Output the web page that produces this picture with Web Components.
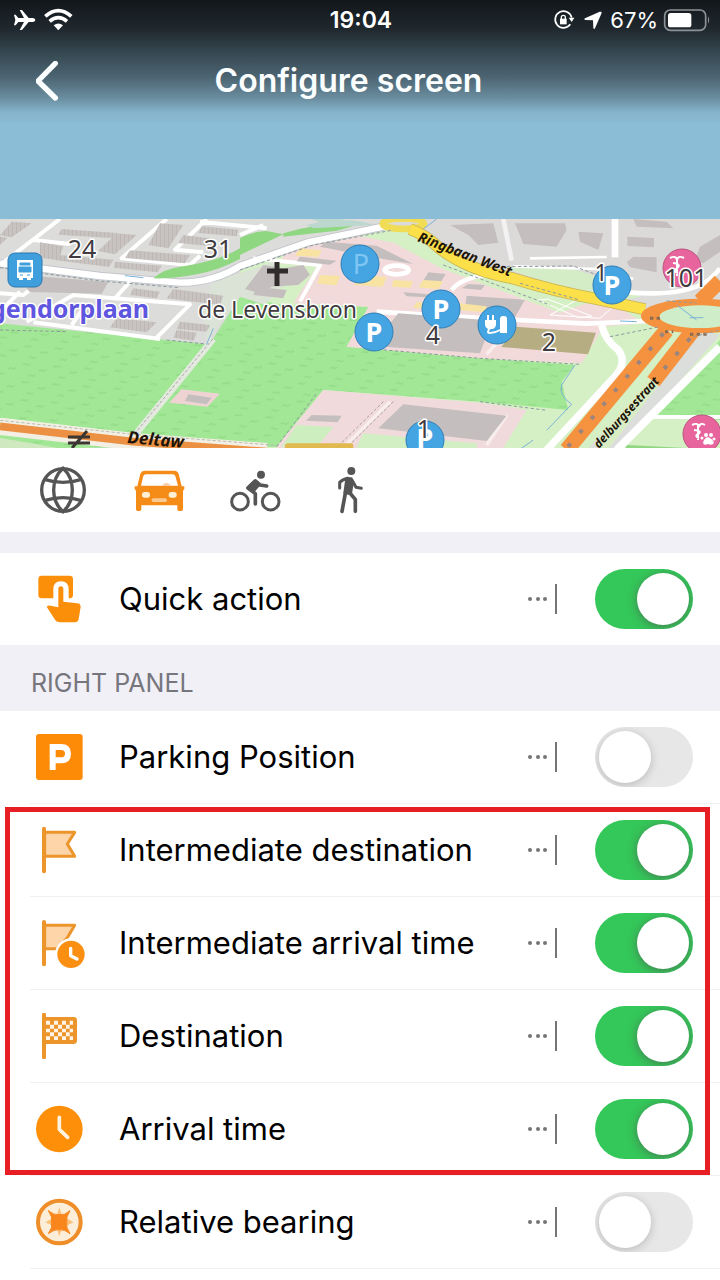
<!DOCTYPE html>
<html lang="en">
<head>
<meta charset="utf-8">
<meta name="viewport" content="width=device-width, initial-scale=1">
<title>Configure screen</title>
<style>
  body { margin: 0; background: #fff; color: #000; font-family: Inter, "Liberation Sans", sans-serif; }
</style>
</head>
<body>
<configure-screen>
  <top-header slot="header">Configure screen</top-header>
  <map-preview slot="map"></map-preview>
  <profile-tabs slot="tabs"></profile-tabs>

  <widget-section>
    <widget-row checked>
      <svg slot="icon" viewBox="108 375 144 144" fill="#fc8f0a"><path d="M125 377h84q10 0 10 10v48q0 9-9 10h-4v-27q0-24-23-24t-23 24v27h-35q-10 0-10-10v-48q0-10 10-10z"/><path d="M175 417q0-8 7.500-8t7.500 8v38l42 5q10 1 10 11l-6 36q-2 10-12 10h-45q-8 0-13-6l-26-41q5-5 12-3l23 5z"/></svg>
      Quick action
    </widget-row>
  </widget-section>

  <widget-section heading="Right panel">
    <widget-row divided>
      <svg slot="icon" viewBox="108 249 144 144"><rect x="108" y="252" width="140" height="138" rx="9" fill="#fd8b08"/><path d="M158 360v-69h25q21 0 21 20t-21 20h-25" fill="none" stroke="#fff" stroke-width="18"/></svg>
      Parking Position
    </widget-row>
    <highlight-frame>
      <widget-row divided checked>
        <svg slot="icon" viewBox="108 528 144 144" stroke="#ec952b" stroke-width="9" stroke-linecap="round" stroke-linejoin="round"><path d="M134 547h90l-22 35 22 37h-90z" fill="#fdd5a8"/><path d="M132 536v128" stroke-width="12"/></svg>
        Intermediate destination
      </widget-row>
      <widget-row divided checked>
        <svg slot="icon" viewBox="108 57 144 144" overflow="visible" stroke="#ec952b" stroke-width="9" stroke-linecap="round" stroke-linejoin="round"><path d="M134 76h90l-22 37-30 33h-38z" fill="#fdd5a8"/><path d="M132 66v127" stroke-width="12"/><circle cx="213" cy="163" r="45" fill="#fff" stroke="#fff" stroke-width="6"/><circle cx="213" cy="163" r="41" fill="#fa8f12" stroke="none"/><path d="M212 145v22l19 10" fill="none" stroke="#fff" stroke-width="10"/></svg>
        Intermediate arrival time
      </widget-row>
      <widget-row divided checked>
        <svg slot="icon" viewBox="108 336 144 144" fill="#ec952b"><rect x="126" y="339" width="12" height="138" rx="4"/><path d="M130 351h91q10 0 10 10v60q0 11-10 11h-91z"/><path d="M138 362h12v12h-12zM162 362h12v12h-12zM186 362h12v12h-12zM209 362h10v12h-10zM150 374h12v12h-12zM174 374h12v12h-12zM198 374h11v12h-11zM138 386h12v11h-12zM162 386h12v11h-12zM186 386h12v11h-12zM209 386h10v11h-10zM150 397h12v12h-12zM174 397h12v12h-12zM198 397h11v12h-11zM138 409h12v11h-12zM162 409h12v11h-12zM186 409h12v11h-12zM209 409h10v11h-10z" fill="#fff4e6"/></svg>
        Destination
      </widget-row>
      <widget-row divided checked>
        <svg slot="icon" viewBox="108 75 144 144"><circle cx="178" cy="147" r="70" fill="#fd8f09"/><path d="M178 112v36l25 24" fill="none" stroke="#fff3df" stroke-width="11" stroke-linecap="round" stroke-linejoin="round"/></svg>
        Arrival time
      </widget-row>
    </highlight-frame>
    <widget-row divided>
      <svg slot="icon" viewBox="108 354 144 144"><circle cx="178" cy="426" r="64" fill="#fdeeda" stroke="#ef8d28" stroke-width="12"/><path d="M178 382l9 26 34 19-34 16-9 26-8-26-34-16 34-19z" fill="#fbc07a"/><path d="M145 392q18 15 33 12 15 3 32-12-13 20-10 35-3 15 10 34-18-14-32-12-15-2-33 12 14-19 10-34 4-15-10-35z" fill="#f8861c" stroke="#f8861c" stroke-width="3"/></svg>
      Relative bearing
    </widget-row>
  </widget-section>
</configure-screen>

<script>
const define = (name, html, setup) => {
  const template = document.createElement('template');
  template.innerHTML = html;
  customElements.define(name, class extends HTMLElement {
    constructor() {
      super();
      this.attachShadow({ mode: 'open' }).append(template.content.cloneNode(true));
    }
    connectedCallback() { if (setup) setup(this, this.shadowRoot); }
  });
};

define('configure-screen', `
<style>
  :host { display: flex; flex-direction: column; background: #fff; }
  main { display: flex; flex-direction: column; }
</style>
<slot name="header"></slot>
<slot name="map"></slot>
<slot name="tabs"></slot>
<main><slot></slot></main>`);

define('status-bar', `
<style>
  :host { display: grid; grid-template-columns: 1fr auto 1fr; align-items: center; height: 40px; padding: 0 12px 0 14px; color: #fff; font-size: 23px; line-height: 28px; }
  svg { display: block; overflow: visible; }
  .left, .right { display: flex; align-items: center; }
  .left { gap: 8px; }
  .right { justify-content: flex-end; gap: 8px; }
  time { font-weight: 600; }
  .right span { font-size: 22px; }
  .battery { margin-left: -2px; }
</style>
<div class="left">
  <svg width="22" height="20" viewBox="45 28 66 60" fill="#fff"><path d="M45 42h5l8 10h17L62 28h7l20 24h13q7 1 7 6t-7 6H89L69 88h-7l13-24H58l-8 10h-5l4-16z"/></svg>
  <svg width="30" height="22" viewBox="134 26 90 66" fill="none" stroke="#fff" stroke-width="11"><path d="M138 48Q177 14 216 48M151 63q26-22 52 0"/><path d="M163 75q14-11 28 0l-14 15z" fill="#fff" stroke="none"/></svg>
</div>
<time>19:04</time>
<div class="right">
  <svg width="22" height="20" viewBox="584 30 66 60" fill="none" stroke="#fff" stroke-width="5"><path d="M633 73a25 25 0 1 1 4-20"/><path d="M628 53h17l-8 13z" fill="#fff" stroke="none"/><path d="M602 56h20v17h-20z" fill="#fff" stroke="none"/><path d="M606 57v-5q0-6 6-6t6 6v5" stroke-width="4"/></svg>
  <svg width="18" height="18" viewBox="677 33 54 54" fill="#fff"><path d="M729 35q2 1 0 6l-19 44q-3 4-5-1l-1-23-23-1q-6-2-1-5l44-20z"/></svg>
  <span>67%</span>
  <svg class="battery" width="44" height="22" viewBox="909 23 132 66"><rect x="911" y="26" width="123" height="61" rx="17" fill="none" stroke="#8d9296" stroke-width="5"/><rect x="921" y="35" width="70" height="43" rx="8" fill="#fff"/><path d="M1041 45q7 11 0 22z" fill="#8d9296"/></svg>
</div>`);

define('top-header', `
<style>
  :host { display: block; height: 219px; background: linear-gradient(#12161a 0, #20292f 30px, #354750 52px, #4d6674 78px, #6a8d9f 98px, #84b3ca 112px, #8bbdd6 124px); }
  nav { display: flex; align-items: center; height: 82px; padding: 0 95px 0 24px; }
  button { display: grid; place-items: center; width: 48px; height: 48px; padding: 0; border: 0; background: none; }
  svg { width: 24px; height: 40px; }
  h1 { flex: 1; margin: 0; color: #fbfeff; font-size: 32px; line-height: 40px; font-weight: 600; text-align: center; }
</style>
<status-bar></status-bar>
<nav>
  <button aria-label="Back"><svg viewBox="108 183 72 120" fill="none" stroke="#fbfeff" stroke-width="16" stroke-linecap="round" stroke-linejoin="round"><path d="M166 190l-52 53 52 51"/></svg></button>
  <h1><slot></slot></h1>
</nav>`);

define('map-preview', `
<style>
  :host { display: block; height: 229px; overflow: hidden; }
  svg { display: block; width: 100%; height: 100%; }
  text { font-family: "Noto Sans", sans-serif; }
  .label { fill: #3f3b40; font-size: 25px; paint-order: stroke; stroke: #fff; stroke-width: 3px; stroke-linejoin: round; }
  .bold { fill: #5f56e0; font-weight: 700; }
  .road { fill: #1d1407; font-weight: 700; font-style: italic; }
  .p { fill: #fff; font-size: 27px; font-weight: 700; text-anchor: middle; }
  .mid { text-anchor: middle; }
  .end { text-anchor: end; }
</style>
<svg viewBox="0 219 720 229" preserveAspectRatio="xMidYMin slice" role="img" aria-label="Map">
  <defs>
    <pattern id="grass" width="92" height="54" patternUnits="userSpaceOnUse" patternTransform="rotate(4)"><rect width="92" height="54" fill="#a1e795"/><path d="M8 12l7-4 7 3 9-4M56 26l8-3 7 3 9-5M24 44l8-4 8 4 7-4" fill="none" stroke="#8fd884" stroke-width="3"/></pattern>
    <pattern id="houses" width="12" height="40" patternUnits="userSpaceOnUse"><rect width="12" height="40" fill="#c8c3c1"/><path d="M0 0v40" stroke="#b3adab" stroke-width="3"/></pattern>
  </defs>
  <g transform="translate(0 215) scale(.33333)">
    <rect y="0" width="2160" height="720" fill="#dcdcda"/>
    <!-- fields, parks and commercial ground -->
    <path d="M720 165l170-70 190-50 140 0 120 70 340 130 240 40 240-10v445H720z" fill="#d6f0c5"/>
    <path d="M0 325L625 388 640 370 720 245 850 270 1110 275 1040 395 1440 430 1725 450 1685 500 1705 585 1440 560 970 525 830 695 0 700z" fill="url(#grass)"/>
    <path d="M640 190l80-15 100-35 40 60-65 70-75-25-80 110-20 20-10-90z" fill="#dae3d6"/>
    <path d="M860 105l220-42 100 20 150 80 350 130 80-28 110 20 60 40-120 10-65 110-305-15-400-35 65-120-225-10 70-110-110-10z" fill="#f2dadb"/>
    <path d="M1220 12h940v215l-150 10-150 8-160-35-110-45-150-10-100-35-60-50-100-30z" fill="#dcdad9"/>
    <path d="M1510 158l190-2 160 50 60 40-60 10-200-48z" fill="#d4edc6"/>
    <path d="M970 525l470 38 140 22-80 130H860l-30-20z" fill="#f0dadb"/>
    <path d="M890 630l110 6-50 60H845z" fill="#cdefbf"/>
    <path d="M1090 655l340 30v30h-370z" fill="#d2efc4"/>
    <path d="M2160 375v240l-210-6z" fill="url(#grass)"/>
    <path d="M545 523l115 13-38 39-115-12z" fill="#efd3d3"/>
    <path d="M2100 345l60 15-300 345h-100z" fill="#dcdedb"/>
    <path d="M1880 690l280 14v10h-290z" fill="#8fd781"/>
    <!-- road network -->
    <path d="M0 145l300 38 240 20q100 0 180-50l200-70 230-48" fill="none" stroke="#c3c6cc" stroke-width="25"/>
    <g fill="none" stroke="#fff" stroke-width="12" stroke-linejoin="round">
      <path d="M0 145l300 38 240 20q100 0 180-50l200-70 230-48" stroke-width="19"/>
      <path d="M180 12L0 150M100 75l110 12M500 12L365 130l205 20 30-28M620 12l-95 92 85 8M390 200l-45 50M0 235l70 5 45-35M0 290l60-60M470 368l100-100-350-28-140 80M215 330l35-50M100 322l380 50M720 60l70-30M600 20l200 20M760 130l200 20-60 110M0 615l390 45"/>
      <path d="M1510 12l25 125" stroke="#f2f2f2" stroke-width="14"/>
      <path d="M1845 12v115" stroke-width="20"/>
      <path d="M1540 154l250 8 110 30M1590 130l230-4" stroke-width="8"/>
      <path d="M1880 232q150 12 220-22 30-12 60-50" stroke-width="14"/>
      <path d="M1355 225q30-40 130-48M1130 290l330 20 300 16 180-8" stroke-width="14"/>
      <path d="M1805 330q10 45 50 75 30 40-15 85l-200 215" stroke-width="22"/>
      <path d="M2160 395l-310 310" stroke-width="24"/>
      <path d="M1950 606h210"/>
      <ellipse cx="1190" cy="165" rx="36" ry="13" fill="#f2dadb" stroke-width="14"/>
      <path d="M1490 385l-30 32M1570 250l-40 60M1170 560l-140 138M1520 600l-60 90" stroke="#f9eeee" stroke-width="10"/>
      <path d="M640 372L405 660" stroke="#e4e9df" stroke-width="20"/>
    </g>
    <path d="M638 372L405 655M1180 560l-140 138M1150 560l-140 138" fill="none" stroke="#8a8585" stroke-width="2" stroke-dasharray="9 6"/>
    <path d="M460 190q30-28 90-36 110-18 170-54v32q-65 34-130 46-70 14-130 12zM720 70q40-22 80-22l50 10-130 62zM850 55q120-35 240-30l-80 22-160 18z" fill="#8fd781"/>
    <path d="M920 30q120-30 200 0l-180 10zM935 12h100l-60 18z" fill="#bcd8ce"/>
    <!-- buildings -->
    <g fill="url(#houses)">
      <path d="M35 20l60 5-60 42-35-6zM0 65l22 4-22 20zM185 42l165 12-15 15-160-10zM350 55l60 5-65 58-50-10zM120 82l70 12-15 42-55-8zM180 120l160 14-12 22-160-20zM480 25l70 5-45 70-60-10zM390 106l180 14-15 25-180-16zM345 140l140 12-12 20-132-14zM605 34l110 10-5 20-115-10zM550 60l95 12-10 22-100-10zM400 220l80 10-10 20-80-10zM520 222l150 20-10 28-160-20zM540 320l90 10-10 20-90-8zM350 310l120 12-30 30-110-15zM530 345l60 8-8 24-62-9zM255 285l120 14-18 14-115-12z"/>
    </g>
    <g fill="#c4bfbe">
      <path d="M130 185l195 16-20 35-215-5-10-10z"/>
      <path d="M790 150l60 10 60-10 20 30-35 30-80 5-30 20-50-12zM770 215l90 10-10 25-90-10zM980 80l150 12 110 55-90-15-190-37zM900 125l110 12-20 12-100-10z"/>
      <path d="M1285 172l52 5-15 25-52-5zM1210 232l70 5 40 12-100-5zM1405 207l50 3-12 15-58-5z"/>
      <path d="M1195 295l260 20 15 20-30 80-290-20-20-20zM1400 242l175 12-30 52-150-25z"/>
      <path d="M1210 568l310 34-60 76-325-38z"/>
      <path d="M1350 30l130-5 15 58-60 7-30-30zM1545 25l150 0 5 20-30 50-100-8zM1735 50l75 5-15 50-55-25zM1882 65l80 4v28l-80-4zM1900 12l100 8 20 20-110-5zM1900 125l70 2v45l-80-15-10-15zM2100 95l60-35v50l-50 35-25-10z"/>
      <path d="M565 538l70 10-15 20-65-10zM935 600l90 2-12 20-95-5z"/>
    </g>
    <path d="M900 100l65 6-10 20-70-4zM960 180l60 3-10 28-58-5zM1070 180l90 6-12 30-85-6zM1180 195l60 4-10 20-55-4zM1270 195l60 4-15 24-60-6zM1250 262l50 0-10 20-50-4zM1380 265l80 9-4 18-86-7z" fill="#f8e3a3"/>
    <path d="M1548 335l240 18-24 65-260-22z" fill="#b7ad82"/>
    <path d="M1615 255l30-2 130 50-40 5zM1650 300l80-45 110 20-40 35z" fill="none" stroke="#ffffff" stroke-width="3"/>
    <rect x="855" y="685" width="205" height="35" rx="8" fill="#e0b94f"/>
    <!-- arterial roads -->
    <g fill="none">
      <ellipse cx="1210" cy="26" rx="62" ry="16" stroke="#f0dd55" stroke-width="20"/>
      <path d="M1230 42q50 20 85 55 90 70 220 92 130 40 250 62l150 32" stroke="#c9b352" stroke-width="36"/>
      <path d="M1230 42q50 20 85 55 90 70 220 92 130 40 250 62l150 32" stroke="#fbe04a" stroke-width="31"/>
      <path d="M2100 258q30-30 60-60" stroke="#f5923f" stroke-width="44"/>
      <path d="M2000 345L1700 705" stroke="#f5923f" stroke-width="46"/>
      <path d="M2080 345L1960 500" stroke="#f5923f" stroke-width="46"/>
      <path d="M1960 500L1800 700" stroke="#d9edc4" stroke-width="40"/>
      <ellipse cx="2098" cy="303" rx="175" ry="52" fill="#f5923f"/>
      <ellipse cx="2100" cy="305" rx="122" ry="34" fill="#cfedc8"/>
      <path d="M1990 355L1700 700M2070 370l-110 130" stroke="#9a8480" stroke-width="12" stroke-dasharray="12 42"/>
      <path d="M1950 310h30M1995 350h25M2070 358h60" stroke="#8c6b4f" stroke-width="9" stroke-dasharray="10 10"/>
      <path d="M0 634l400 46 400 30" stroke="#f3efe4" stroke-width="52"/>
      <path d="M0 616l400 42 430 33" stroke="#b8beb0" stroke-width="3" stroke-dasharray="10 6"/>
      <path d="M0 634l400 46 400 30" stroke="#ec9143" stroke-width="23"/>
      <path d="M0 668l180 32 200 30H0z" fill="#cfe8c0"/>
      <path d="M0 158l300 40 240 20M0 345l200 5M500 375l120 12M720 165l220-75 240-45M830 695l120-160M1100 400l340 30 300 18M1440 560l200 26M1560 205l180 50M1330 150l320 120M1830 365l150-30M1520 155l200-2 160 60M2000 258l90 6M2080 365l80-20" stroke="#8d9a9d" stroke-width="3" stroke-dasharray="10 7"/>
      <path d="M1725 450l-40 60q-10 30 30 58l-75 78M1600 675l-50 35M1310 12l-40 30M640 340l-20 48M375 182l55 6M1860 318l50 2M2030 270l60 45M2070 308h40" stroke="#7bb2d8" stroke-width="3"/>
    </g>
  </g>
  <!-- map labels and points of interest -->
  <text class="label mid" x="82" y="258">24</text>
  <text class="label mid" x="218" y="258">31</text>
  <text class="label bold end" x="149" y="318">gendorplaan</text>
  <text class="label" x="198" y="318" style="font-size:23px">de Levensbron</text>
  <text class="road" x="417" y="241" font-size="14" transform="rotate(21 417 241)">Ringbaan West</text>
  <text class="road" x="127" y="443" font-size="17" transform="rotate(5 127 443)">Deltaw</text>
  <text class="road" x="599" y="449" font-size="12" transform="rotate(-48 599 449)">delburgsestraat</text>
  <path d="M277 262v24M267 271h21" stroke="#302c2b" stroke-width="5" fill="none"/>
  <path d="M68 437h22M68 443h22M72 448l15-17" stroke="#3c3633" stroke-width="3" fill="none"/>
  <rect x="8" y="253" width="34" height="34" rx="7" fill="#3f9fdc" stroke="#2d78b0"/>
  <path d="M17 260h16v18h-2v2h-4v-2h-4v2h-4v-2h-2z" fill="#fff"/><path d="M20 263h10v2H20zM19 267h12v5H19zM20 275h3M27 275h3" fill="#3f9fdc" stroke="#3f9fdc"/>
  <g fill="#44a5e2" stroke="#2e7db5"><circle cx="360" cy="264" r="19"/><circle cx="374" cy="332" r="19"/><circle cx="441" cy="309" r="19"/><circle cx="497" cy="325" r="19"/><circle cx="612" cy="285" r="19"/><circle cx="425" cy="440" r="19"/></g>
  <g fill="#e8649d" stroke="#b9527d"><circle cx="682" cy="268" r="19"/><circle cx="702" cy="434" r="19"/></g>
  <text class="p" x="361" y="274" style="fill:#7fc6f4;font-weight:400">P</text>
  <text class="p" x="374" y="342">P</text>
  <text class="p" x="441" y="319">P</text>
  <text class="p" x="612" y="295">P</text>
  <text class="p" x="425" y="448">P</text>
  <path d="M488 315v6M493 315v6" stroke="#fff" stroke-width="2"/><path d="M485 320h11v5q-1 4-4 4h-3q-3 0-4-4z" fill="#fff"/><path d="M490 328q-4 5 0 5 5 0 10-3" stroke="#fff" stroke-width="2" fill="none"/><path d="M500 319q0-3 3-3h1q3 0 3 3v14h-7z" fill="#fff"/>
  <path d="M670 258q6-3 7 2 1-5 7-2M677 258v18M673 263q9 1 4 5-5 3 1 5" stroke="#fff" stroke-width="2" fill="none"/>
  <path d="M692 425q6-3 7 2 1-5 6-2M698 425v15M694 430q9 1 4 4-4 2 1 4" stroke="#fff" stroke-width="2" fill="none"/>
  <g fill="#fff"><path d="M703 443q1-5 5-6 5 2 6 6-2 3-6 1-4 2-5-1z"/><circle cx="702" cy="438" r="1.500"/><circle cx="706" cy="435" r="2"/><circle cx="711" cy="435" r="2"/><circle cx="714" cy="439" r="1.500"/></g>
  <text class="label mid" x="433" y="344">4</text>
  <text class="label mid" x="549" y="351">2</text>
  <text class="label mid" x="601" y="281" style="font-size:23px">1</text>
  <text class="label mid" x="686" y="287">101</text>
  <text class="label mid" x="424" y="438">1</text>
</svg>`);

define('profile-tabs', `
<style>
  :host { display: flex; gap: 48px; padding: 18px 39px; border-bottom: 21px solid #f1f0f7; }
  button { width: 48px; height: 48px; padding: 0; border: 0; background: none; color: #555; }
  button[aria-pressed=true] { color: #f58c18; }
  svg { display: block; width: 48px; height: 48px; overflow: visible; }
</style>
<button aria-label="All profiles" aria-pressed="false"><svg viewBox="117 48 144 144" fill="none" stroke="currentColor" stroke-width="10"><circle cx="189" cy="120" r="64"/><path d="M189 55q-28 25-28 65t28 65q28-25 28-65t-28-65zM133 88q56 18 112 0M133 152q56-18 112 0"/></svg></button>
<button aria-label="Driving" aria-pressed="true"><svg viewBox="405 48 144 144"><path d="M433 62h90q9 0 13 9l9 38h8v8l-4 5v56q0 5-5 5h-7q-5 0-5-5v-12H424v12q0 5-5 5h-6q-5 0-5-5v-56l-4-5v-8h8l9-38q4-9 12-9z" fill="currentColor"/><path d="M438 73h80q6 0 8 5l8 29H423l7-29q2-5 8-5z" fill="#fff"/><path d="M486 107q12-16 28 0z" fill="#f9c7a0"/><rect x="426" y="126" width="24" height="17" rx="8" fill="#fff1d6"/><rect x="506" y="126" width="24" height="17" rx="8" fill="#fff1d6"/><rect x="455" y="145" width="46" height="11" rx="5" fill="#fbc992"/></svg></button>
<button aria-label="Cycling" aria-pressed="false"><svg viewBox="693 48 144 144" fill="none" stroke="currentColor" stroke-linecap="round" stroke-linejoin="round"><circle cx="720" cy="155" r="25" stroke-width="9"/><circle cx="812" cy="155" r="25" stroke-width="9"/><circle cx="783" cy="74" r="12" fill="currentColor" stroke="none"/><path d="M800 108l-20-3-14-12-22 21 22 17v31" stroke-width="11"/><path d="M764 93l-20 20 16 10 16-18z" fill="currentColor" stroke-width="9"/></svg></button>
<button aria-label="Walking" aria-pressed="false"><svg viewBox="981 48 144 144" fill="none" stroke="currentColor" stroke-linecap="round" stroke-linejoin="round"><circle cx="1054" cy="63" r="12" fill="currentColor" stroke="none"/><path d="M1044 85q-17 4-25 12v17" stroke-width="9"/><path d="M1056 90l12 22 16 3" stroke-width="9"/><path d="M1040 86h14l2 20-4 25-18-2z" fill="currentColor" stroke-width="8"/><path d="M1036 130l-10 54M1047 126l19 22v36" stroke-width="11"/></svg></button>`);

define('widget-section', `
<style>
  :host { display: block; }
  h2 { margin: 0; padding: 22px 31px 12px; background: #f1f0f7; color: #77767d; font-size: 25px; line-height: 32px; font-weight: 400; text-transform: uppercase; }
  h2[hidden] { display: none; }
</style>
<h2 hidden></h2>
<slot></slot>`, (host, root) => {
  const heading = root.querySelector('h2');
  heading.textContent = host.getAttribute('heading') || '';
  heading.hidden = !heading.textContent;
});

define('widget-row', `
<style>
  :host { position: relative; display: flex; align-items: center; min-height: 92px; padding: 0 27px 0 36px; }
  :host([divided])::after { content: ""; display: block; position: absolute; left: 30px; right: 0; bottom: 0; height: 1px; background: #f1f1f3; }
  :host([divided]) { padding-bottom: 1px; }
  ::slotted(svg) { flex: none; width: 48px; height: 48px; }
  label { flex: 1; margin-left: 35px; font-size: 31px; line-height: 40px; }
  button { flex: none; width: 30px; height: 32px; margin-right: 37px; padding: 0; border: 0; background: none; }
  button svg { display: block; }
  input { flex: none; appearance: none; box-sizing: border-box; width: 98px; height: 60px; margin: 0; padding: 4px; border-radius: 30px; background: #e7e7e8; overflow: hidden; }
  input::before { content: ""; display: block; width: 52px; height: 52px; border-radius: 50%; background: #fff; box-shadow: 0 2px 10px rgba(0,0,0,.2); }
  input:checked { background: #34c759; }
  input:checked::before { margin-left: 38px; box-shadow: 0 2px 10px rgba(80,80,80,.6); }
</style>
<slot name="icon"></slot>
<label for="toggle"><slot></slot></label>
<button aria-label="Options"><svg width="30" height="32" viewBox="0 0 30 32" fill="#757575"><circle cx="2" cy="16" r="2"/><circle cx="10" cy="16" r="2"/><circle cx="17" cy="16" r="2"/><path d="M27 1h2v30h-2z"/></svg></button>
<input id="toggle" type="checkbox" role="switch">`, (host, root) => {
  root.querySelector('input').checked = host.hasAttribute('checked');
});

define('highlight-frame', `
<style>
  :host { position: relative; display: block; }
  div { position: absolute; inset: 3px 10px 1px 5px; border: 5px solid #e81e25; pointer-events: none; }
</style>
<slot></slot>
<div></div>`);
</script>
</body>
</html>
